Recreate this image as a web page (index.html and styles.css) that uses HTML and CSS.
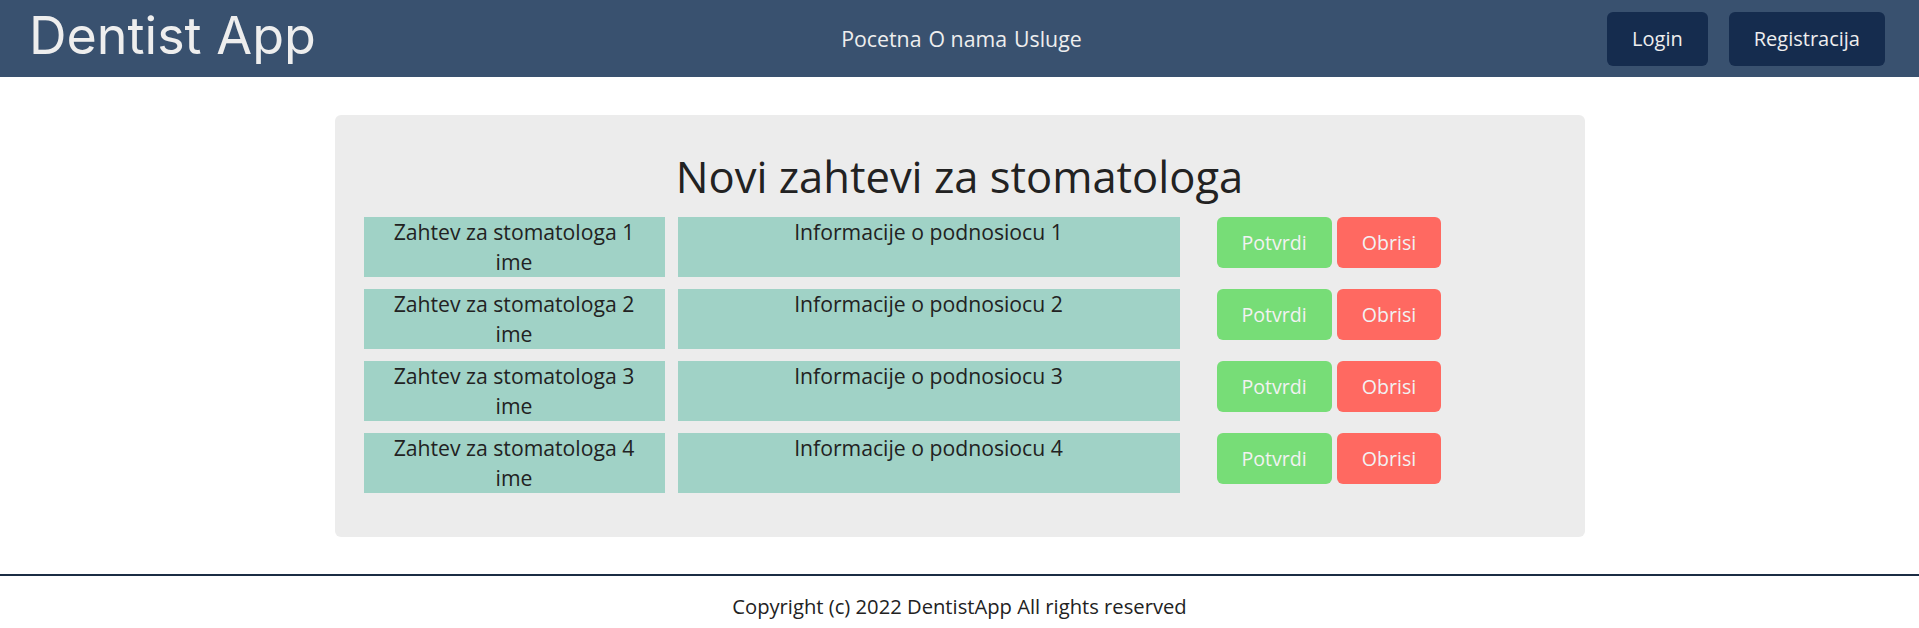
FILE: index.html
```html
<!DOCTYPE html>
<html lang="sr">
<head>
<meta charset="utf-8">
<title>Dentist App</title>
<link rel="stylesheet" href="styles.css">
</head>
<body>
<header class="topbar">
  <div class="brand">Dentist App</div>
  <nav class="nav">
    <a href="#">Pocetna</a>
    <a href="#">O nama</a>
    <a href="#">Usluge</a>
  </nav>
  <div class="auth">
    <button class="auth-btn">Login</button>
    <button class="auth-btn">Registracija</button>
  </div>
</header>

<main class="main">
  <section class="card">
    <h1 class="card-title">Novi zahtevi za stomatologa</h1>
    <div class="rows">
      <div class="row">
        <div class="cell cell-name">Zahtev za stomatologa 1<br>ime</div>
        <div class="cell cell-info">Informacije o podnosiocu 1</div>
        <div class="actions">
          <button class="btn btn-ok">Potvrdi</button>
          <button class="btn btn-del">Obrisi</button>
        </div>
      </div>
      <div class="row">
        <div class="cell cell-name">Zahtev za stomatologa 2<br>ime</div>
        <div class="cell cell-info">Informacije o podnosiocu 2</div>
        <div class="actions">
          <button class="btn btn-ok">Potvrdi</button>
          <button class="btn btn-del">Obrisi</button>
        </div>
      </div>
      <div class="row">
        <div class="cell cell-name">Zahtev za stomatologa 3<br>ime</div>
        <div class="cell cell-info">Informacije o podnosiocu 3</div>
        <div class="actions">
          <button class="btn btn-ok">Potvrdi</button>
          <button class="btn btn-del">Obrisi</button>
        </div>
      </div>
      <div class="row">
        <div class="cell cell-name">Zahtev za stomatologa 4<br>ime</div>
        <div class="cell cell-info">Informacije o podnosiocu 4</div>
        <div class="actions">
          <button class="btn btn-ok">Potvrdi</button>
          <button class="btn btn-del">Obrisi</button>
        </div>
      </div>
    </div>
  </section>
</main>

<footer class="footer">Copyright (c) 2022 DentistApp All rights reserved</footer>
</body>
</html>
```

FILE: styles.css
```css
* { box-sizing: border-box; }

html, body {
  margin: 0;
  padding: 0;
  background: #ffffff;
  font-family: "Open Sans", "Noto Sans", sans-serif;
  color: #222222;
}

.topbar {
  height: 77px;
  background: #39516f;
  display: flex;
  align-items: center;
  justify-content: space-between;
  padding: 0 34px 0 29px;
}

.brand {
  font-family: Inter, "Open Sans", sans-serif;
  font-size: 52px;
  font-weight: 400;
  color: #eeeeee;
  line-height: 60px;
  margin-top: -6px;
}

.nav {
  display: flex;
  gap: 7px;
}

.nav a {
  color: #eeeeee;
  text-decoration: none;
  font-size: 21.3px;
  line-height: 28px;
}

.auth {
  display: flex;
  gap: 21px;
}

.auth-btn {
  height: 54px;
  padding: 0 25px;
  border: none;
  border-radius: 6px;
  background: #152c4e;
  color: #eeeeee;
  font-family: "Open Sans", sans-serif;
  font-size: 20px;
}

.main {
  padding: 38px 0 37px;
}

.card {
  width: 1250px;
  margin: 0 auto;
  background: #ececec;
  border-radius: 6px;
  padding: 32px 29px 44px;
}

.card-title {
  margin: 0 0 10px;
  text-align: center;
  font-size: 43.5px;
  font-weight: 400;
  line-height: 60px;
  color: #222222;
}

.rows {
  display: flex;
  flex-direction: column;
  gap: 12px;
}

.row {
  display: flex;
  align-items: flex-start;
  gap: 13px;
}

.cell {
  height: 60px;
  background: #a0d2c6;
  text-align: center;
  font-size: 21.2px;
  line-height: 30px;
  color: #222222;
}

.cell-name { width: 301px; }
.cell-info { width: 502px; }

.actions {
  display: flex;
  gap: 5px;
  margin-left: 24px;
}

.btn {
  height: 51px;
  padding: 0 25px;
  border: none;
  border-radius: 6px;
  color: #f2f2f2;
  font-family: "Open Sans", sans-serif;
  font-size: 19.6px;
}

.btn-ok { background: #77dd77; }
.btn-del { background: #ff6961; }

.footer {
  border-top: 2px solid #1b2d44;
  padding-top: 12px;
  text-align: center;
  font-size: 20.2px;
  line-height: 36px;
  color: #222222;
}
```
